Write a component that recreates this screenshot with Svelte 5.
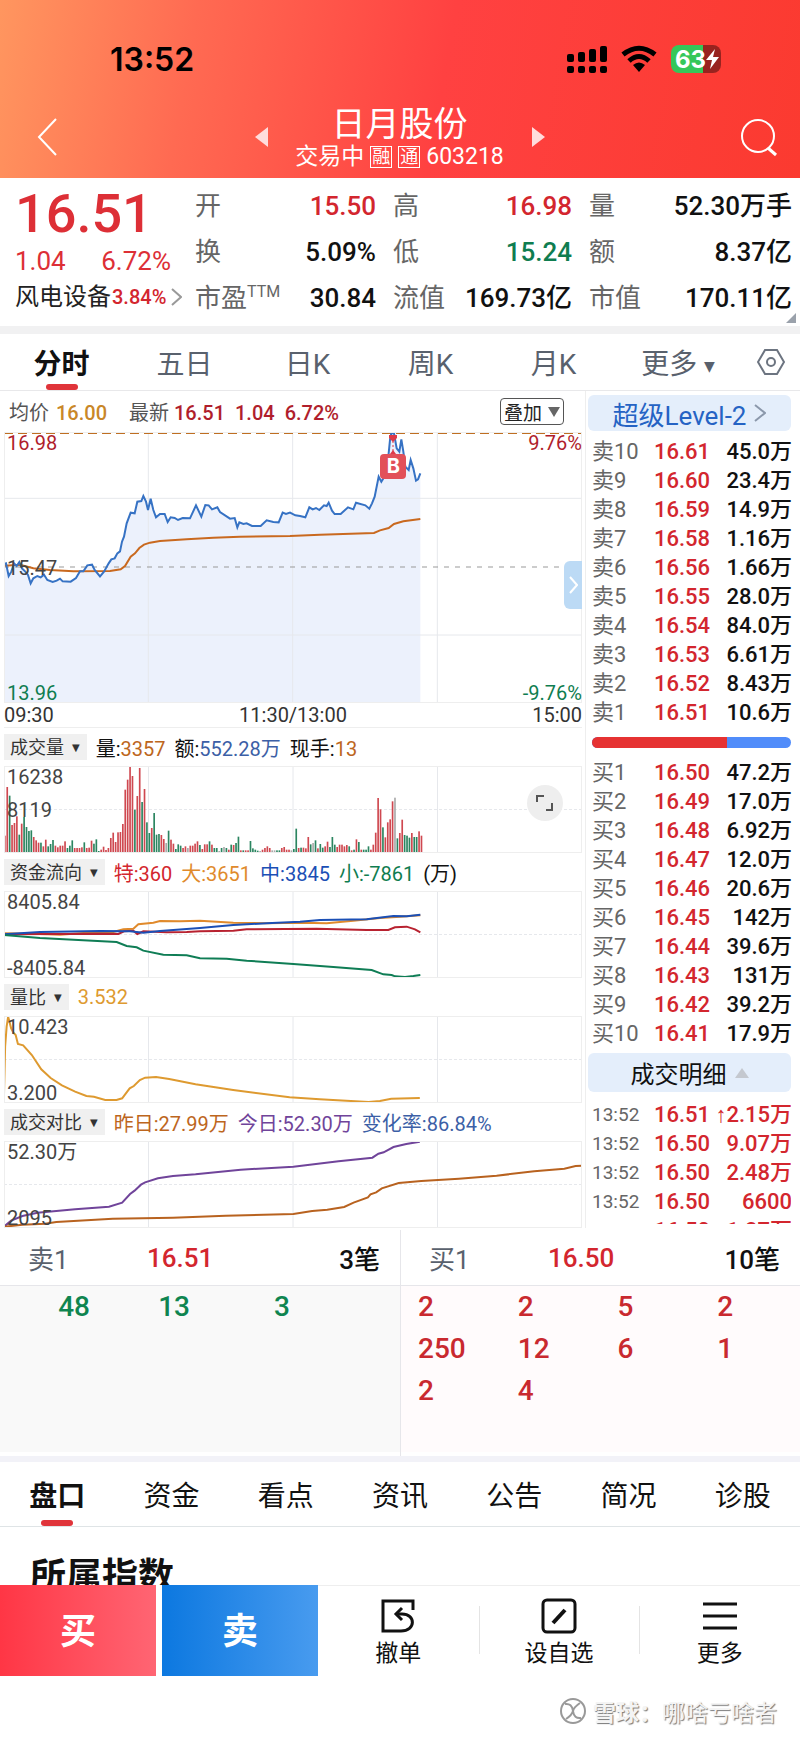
<script lang="ts">
	type Level = { name: string; price: string; amount: string };

	const stats = [
		{ label: '开', value: '15.50', tone: 'up' },
		{ label: '高', value: '16.98', tone: 'up' },
		{ label: '量', value: '52.30万手', tone: '' },
		{ label: '换', value: '5.09%', tone: '' },
		{ label: '低', value: '15.24', tone: 'down' },
		{ label: '额', value: '8.37亿', tone: '' },
		{ label: '市盈', sup: 'TTM', value: '30.84', tone: '' },
		{ label: '流值', value: '169.73亿', tone: '' },
		{ label: '市值', value: '170.11亿', tone: '' }
	];

	const periods = ['分时', '五日', '日K', '周K', '月K'];
	const sections = ['盘口', '资金', '看点', '资讯', '公告', '简况', '诊股'];
	const indicators = ['成交量', '资金流向', '量比', '成交对比'];

	let period = $state('分时');
	let section = $state('盘口');

	function levels(side: string, from: number, step: number, rows: string): Level[] {
		return rows.split(' ').map((row, i) => {
			const [price, amount] = row.split('/');
			return { name: side + (from + i * step), price, amount };
		});
	}

	const asks = levels('卖', 10, -1, '16.61/45.0万 16.60/23.4万 16.59/14.9万 16.58/1.16万 16.56/1.66万 16.55/28.0万 16.54/84.0万 16.53/6.61万 16.52/8.43万 16.51/10.6万');
	const bids = levels('买', 1, 1, '16.50/47.2万 16.49/17.0万 16.48/6.92万 16.47/12.0万 16.46/20.6万 16.45/142万 16.44/39.6万 16.43/131万 16.42/39.2万 16.41/17.9万');
	const buyShare = 68;

	const trades = [
		{ time: '13:52', price: '16.51', arrow: '↑', amount: '2.15万' },
		{ time: '13:52', price: '16.50', arrow: '', amount: '9.07万' },
		{ time: '13:52', price: '16.50', arrow: '', amount: '2.48万' },
		{ time: '13:52', price: '16.50', arrow: '', amount: '6600' },
		{ time: '', price: '16.50', arrow: '↑', amount: '1.27万' }
	];

	const askQueue = ['48', '13', '3'];
	const bidQueue = ['2', '2', '5', '2', '250', '12', '6', '1', '2', '4'];

	// intraday price and average price
	const price = '12,522 18,520 26,558 34,545 42,520 50,528 58,516 66,535 76,545 84,555 92,580 100,565 112,558 122,562 132,554 142,570 158,576 170,572 180,566 188,574 212,575 228,564 240,544 250,544 262,526 276,524 284,540 300,559 312,545 326,520 334,508 344,505 352,490 360,484 366,455 372,440 380,400 392,368 404,370 412,335 424,333 430,318 438,335 444,360 452,326 460,360 468,382 480,372 494,372 503,396 512,382 524,384 534,390 548,384 570,385 588,346 604,380 616,345 626,346 636,358 652,352 660,366 690,386 704,384 712,412 718,397 730,402 740,400 756,408 782,408 800,391 820,396 836,397 848,368 858,372 870,368 886,376 900,378 916,382 928,352 938,358 948,354 958,360 972,346 980,348 986,338 996,362 1004,372 1022,372 1044,352 1060,358 1068,338 1096,346 1108,356 1116,340 1124,320 1136,260 1144,275 1152,262 1166,190 1170,150 1174,130 1182,130 1190,175 1198,185 1204,148 1210,185 1216,230 1226,240 1232,210 1240,235 1248,272 1254,268 1261,250';
	const average = '12,527 60,524 100,535 150,540 220,544 330,543 362,538 375,528 392,500 405,490 418,474 432,464 450,458 480,453 560,448 640,443 720,440 870,438 960,434 1122,429 1140,421 1166,414 1182,402 1210,394 1261,387';

	// one bar per minute: r = up, g = down, n = flat
	const volume = 'r52 r198 g172 r84 r90 r110 g55 r88 g108 g78 g66 g68 r48 r38 r31 g31 r20 r40 g20 g27 g39 r22 r17 r22 r22 r35 g15 g22 g38 r15 r15 r15 r17 g32 r15 r16 r37 g28 g41 g6 r10 r19 r9 r15 r45 r61 r33 r62 r63 r87 r190 r220 r259 r231 g130 r171 r255 g153 r192 g92 g60 r75 g120 g55 g57 r54 r42 n30 g67 r40 r28 g12 g26 g22 r15 r20 n15 r22 r22 r28 r35 g24 r12 r26 r26 g35 r25 g15 g15 n6 g15 n18 g15 r10 g25 r24 g30 g49 r8 g8 r8 r8 g36 g14 g10 g7 n6 r10 r15 r20 r15 n8 n8 g8 g8 r15 r18 r10 r10 n8 g12 g73 r15 g16 r16 r14 r48 g26 n30 g38 r14 g27 g16 r20 r34 g18 g48 g25 r18 r25 r25 r20 r24 g20 r8 g10 r41 g33 r10 g10 g10 g20 r10 r25 r61 r165 r131 g77 r47 r92 r101 r155 n166 g44 r60 r100 g54 g52 g46 r60 g48 g48 r65 r52'
		.split(' ')
		.map((bar) => ({ kind: bar[0], size: Number(bar.slice(1)) }));

	const flow = [
		{ color: '#e08a2c', points: '12,610 100,611 180,614 260,608 340,606 370,598 400,596 415,583 460,578 480,573 540,574 600,572 700,578 800,580 900,578 980,580 1060,572 1140,564 1200,560 1261,556' },
		{ color: '#b82230', points: '12,613 300,611 355,612 372,604 400,602 412,612 430,604 500,607 560,606 600,604 700,602 740,598 950,596 1100,600 1165,600 1185,592 1220,590 1245,598 1261,607' },
		{ color: '#1b4fb5', points: '12,613 120,606 300,603 390,604 430,608 480,603 600,594 700,585 800,580 900,575 960,570 1100,568 1180,558 1220,559 1261,554' },
		{ color: '#0f7d55', points: '12,615 120,624 350,636 380,648 410,652 430,662 490,674 560,676 600,685 680,686 740,692 880,702 1000,711 1115,720 1150,733 1175,735 1185,739 1215,741 1240,738 1261,735' }
	];
	const ratio = '11,345 14,200 18,140 22,110 30,145 36,158 42,165 48,192 62,196 85,225 110,268 135,294 165,316 200,335 230,348 250,350 280,360 310,360 325,355 345,325 356,318 372,300 386,293 415,291 450,297 520,313 620,330 770,352 850,358 980,366 1010,363 1040,356 1116,354';
	const today = '11,740 30,722 60,708 100,698 200,688 290,680 325,668 346,642 358,632 375,614 386,607 420,595 460,588 520,583 640,569 780,560 900,544 990,533 1006,521 1020,517 1046,501 1080,492 1116,485';
	const yesterday = '11,740 60,734 120,731 150,726 300,716 460,713 600,707 780,702 830,693 870,689 915,681 940,668 978,652 985,643 1000,637 1015,625 1060,609 1120,603 1220,596 1320,587 1420,574 1500,566 1530,558 1546,557';
</script>

{#snippet grid(x, y, w, h)}
	<path class="grid" d="M{x} {y + h / 2}H{x + w}" stroke-dasharray="3 2" />
	<path class="grid" d="M{x + w / 4} {y}V{y + h}M{x + w / 2} {y}V{y + h}M{x + (w * 3) / 4} {y}V{y + h}" />
{/snippet}

{#snippet picker(name)}
	<span class="picker">
		<select aria-label="指标" value={name}>
			{#each indicators as item}
				<option>{item}</option>
			{/each}
		</select>
		<span class="caret">▼</span>
	</span>
{/snippet}

{#snippet book(rows)}
	<table class="book">
		<tbody>
			{#each rows as row}
				<tr>
					<th scope="row">{row.name}</th>
					<td class="up">{row.price}</td>
					<td class="amount">{row.amount}</td>
				</tr>
			{/each}
		</tbody>
	</table>
{/snippet}

<div class="app">
	<header>
		<div class="status">
			<span class="clock">13:52</span>
			<div class="signals">
				<svg width="40" height="28" viewBox="0 0 40 28">
					<rect x="0" y="9" width="7" height="8" rx="2" />
					<rect x="11" y="7" width="7" height="10" rx="2" />
					<rect x="22" y="4" width="7" height="13" rx="2" />
					<rect x="33" y="1" width="7" height="16" rx="2" />
					<rect x="0" y="21" width="7" height="7" rx="2" />
					<rect x="11" y="21" width="7" height="7" rx="2" />
					<rect x="22" y="21" width="7" height="7" rx="2" />
					<rect x="33" y="21" width="7" height="7" rx="2" />
				</svg>
				<svg width="36" height="28" viewBox="0 0 36 28">
					<g fill="none" stroke="#000" stroke-width="5">
						<path d="M2 9.500Q18 -3 34 9.500" />
						<path d="M8 16Q18 7 28 16" />
					</g>
					<path d="M12 20Q18 15 24 20L18 27Z" />
				</svg>
				<span class="battery"><span class="level">63</span>
					<svg width="13" height="20" viewBox="0 0 13 20"><path d="M9 0L0 11H6L4 20L13 8H7Z" fill="#fff" /></svg>
				</span>
			</div>
		</div>
		<div class="title-bar">
			<button aria-label="返回">
				<svg width="24" height="40" viewBox="0 0 24 40"><path d="M20 2L3 20L20 38" fill="none" stroke="#fff" stroke-width="2" /></svg>
			</button>
			<div class="stock">
				<button aria-label="上一只"><svg width="13" height="20" viewBox="0 0 13 20"><path d="M13 0V20L0 10Z" fill="#ffdcdc" /></svg></button>
				<div class="name">
					<h1>日月股份</h1>
					<p>交易中 <span class="badge">融</span><span class="badge">通</span> 603218</p>
				</div>
				<button aria-label="下一只"><svg width="13" height="20" viewBox="0 0 13 20"><path d="M0 0V20L13 10Z" fill="#ffdcdc" /></svg></button>
			</div>
			<button aria-label="搜索">
				<svg width="40" height="40" viewBox="0 0 40 40" fill="none" stroke="#fff" stroke-width="2">
					<circle cx="19" cy="19" r="16" />
					<path d="M29 31L37 38" stroke-width="3" />
				</svg>
			</button>
		</div>
	</header>

	<section class="quote">
		<div class="last">
			<strong>16.51</strong>
			<div class="change"><span>1.04</span><span>6.72%</span></div>
			<a href="#industry">风电设备<b>3.84%</b>
				<svg width="11" height="18" viewBox="0 0 11 18"><path d="M1 1L10 9L1 17" fill="none" stroke="#999" stroke-width="2" /></svg>
			</a>
		</div>
		<dl>
			{#each stats as stat}
				<div>
					<dt>{stat.label}{#if stat.sup}<sup>{stat.sup}</sup>{/if}</dt>
					<dd class={stat.tone}>{stat.value}</dd>
				</div>
			{/each}
		</dl>
		<span class="corner"></span>
	</section>

	<nav class="periods">
		{#each periods as item}
			<button class:active={period === item} onclick={() => (period = item)}>{item}</button>
		{/each}
		<button class="more">更多 <span class="caret">▼</span></button>
		<button class="settings" aria-label="设置">
			<svg width="28" height="28" viewBox="0 0 28 28" fill="none" stroke="#6c7480" stroke-width="2">
				<path d="M8 2H20L27 14L20 26H8L1 14Z" />
				<circle cx="14" cy="14" r="4" />
			</svg>
		</button>
	</nav>

	<main>
		<div class="charts">
			<div class="legend">
				<span>均价 <b class="avg">16.00</b></span>
				<span>最新 <b>16.51</b><b>1.04</b><b>6.72%</b></span>
				<button class="overlay">叠加 <svg width="12" height="10" viewBox="0 0 12 10"><path d="M0 0H12L6 10Z" fill="#666" /></svg></button>
			</div>
			<div class="plot price">
				<svg viewBox="12 126 1734 813" preserveAspectRatio="none">
					<polygon points="12,939 {price} 1261,939" fill="#ecf1fc" />
					<path class="grid" d="M12 325H1746M12 735H1746M445 126V939M878 126V939M1312 126V939" />
					<path d="M12 531H1746" stroke="#999" stroke-dasharray="5 6" />
					<path d="M12 129H1746" stroke="#bf6f22" stroke-width="2" stroke-dasharray="9 5" />
					<polyline points={average} stroke="#c9691f" stroke-width="2" />
					<polyline points={price} stroke="#3672c4" stroke-width="2" />
				</svg>
				<span class="mark top red">16.98</span>
				<span class="mark top right red">9.76%</span>
				<span class="mark middle">15.47</span>
				<span class="mark bottom green">13.96</span>
				<span class="mark bottom right green">-9.76%</span>
				<span class="trade">
					<svg width="10" height="20" viewBox="0 0 10 20"><path d="M1 1H9V4L5 8L1 4Z" fill="#dd3a48" /><path d="M5 7V18" stroke="#dd3a48" stroke-dasharray="2 2" /><path d="M2 20L5 16L8 20Z" fill="#e25059" /></svg>
					<b>B</b>
				</span>
				<button class="drawer" aria-label="展开">
					<svg width="9" height="18" viewBox="0 0 9 18"><path d="M1 1L8 9L1 17" fill="none" stroke="#fff" stroke-width="2" /></svg>
				</button>
			</div>
			<div class="times"><span>09:30</span><span>11:30/13:00</span><span>15:00</span></div>

			<div class="head">
				{@render picker('成交量')}
				<span class="strong">量:<i class="brown">3357</i></span>
				<span class="strong">额:<i class="blue">552.28万</i></span>
				<span class="strong">现手:<i class="brown">13</i></span>
			</div>
			<div class="plot">
				<svg viewBox="12 108 1734 261" preserveAspectRatio="none">
					{@render grid(12, 108, 1734, 261)}
					{#each volume as bar, i}
						<rect class={bar.kind} x={12 + i * 7.225} y={369 - bar.size} width="5" height={bar.size} />
					{/each}
				</svg>
				<span class="mark top">16238</span>
				<span class="mark middle">8119</span>
				<button class="expand" aria-label="全屏">
					<svg width="18" height="18" viewBox="0 0 18 18" fill="none" stroke="#555" stroke-width="2"><path d="M1 8V2H8M10 16H16V9" /></svg>
				</button>
			</div>

			<div class="head">
				{@render picker('资金流向')}
				<span class="up">特:360</span>
				<span class="orange">大:3651</span>
				<span class="navy">中:3845</span>
				<span class="green">小:-7861</span>
				<span>(万)</span>
			</div>
			<div class="plot">
				<svg viewBox="12 483 1734 261" preserveAspectRatio="none">
					{@render grid(12, 483, 1734, 261)}
					{#each flow as line}
						<polyline points={line.points} stroke={line.color} stroke-width="2" />
					{/each}
				</svg>
				<span class="mark top">8405.84</span>
				<span class="mark bottom">-8405.84</span>
			</div>

			<div class="head">
				{@render picker('量比')}
				<span class="gold">3.532</span>
			</div>
			<div class="plot">
				<svg viewBox="11 108 1536 261" preserveAspectRatio="none">
					{@render grid(11, 108, 1536, 261)}
					<polyline points={ratio} stroke="#de9a30" stroke-width="2" />
				</svg>
				<span class="mark top">10.423</span>
				<span class="mark bottom">3.200</span>
			</div>

			<div class="head">
				{@render picker('成交对比')}
				<span class="brown">昨日:27.99万</span>
				<span class="purple">今日:52.30万</span>
				<span class="blue">变化率:86.84%</span>
			</div>
			<div class="plot">
				<svg viewBox="11 483 1536 261" preserveAspectRatio="none">
					{@render grid(11, 483, 1536, 261)}
					<polyline points={today} stroke="#70449a" stroke-width="2" />
					<polyline points={yesterday} stroke="#b8621f" stroke-width="2" />
				</svg>
				<span class="mark top">52.30万</span>
				<span class="mark bottom">2095</span>
			</div>
		</div>

		<aside>
			<button class="panel-button level2">超级Level-2
				<svg width="12" height="18" viewBox="0 0 12 18"><path d="M1 1L11 9L1 17" fill="none" stroke="#8b98ab" stroke-width="2" /></svg>
			</button>
			{@render book(asks)}
			<div class="share"><span style="width: {buyShare}%"></span></div>
			{@render book(bids)}
			<button class="panel-button detail">成交明细
				<svg width="14" height="10" viewBox="0 0 14 10"><path d="M7 0L14 10H0Z" fill="#c4c8cf" /></svg>
			</button>
			<div class="trades">
				<table class="book">
					<tbody>
						{#each trades as trade}
							<tr>
								<th scope="row">{trade.time}</th>
								<td class="up">{trade.price}</td>
								<td class="amount up"><i class="arrow">{trade.arrow}</i>{trade.amount}</td>
							</tr>
						{/each}
					</tbody>
				</table>
			</div>
		</aside>
	</main>

	<section class="queues">
		<div class="queue ask">
			<div class="queue-head"><span>卖1</span><b class="up">16.51</b><b>3笔</b></div>
			<ul>
				{#each askQueue as lot}<li>{lot}</li>{/each}
			</ul>
		</div>
		<div class="queue bid">
			<div class="queue-head"><span>买1</span><b class="up">16.50</b><b>10笔</b></div>
			<ul>
				{#each bidQueue as lot}<li>{lot}</li>{/each}
			</ul>
		</div>
	</section>

	<nav class="sections">
		{#each sections as item}
			<button class:active={section === item} onclick={() => (section = item)}>{item}</button>
		{/each}
	</nav>
	<section class="index"><h2>所属指数</h2></section>

	<footer>
		<button class="buy">买</button>
		<button class="sell">卖</button>
		<div class="tools">
			<button>
				<svg width="36" height="36" viewBox="0 0 36 36" fill="none" stroke="#111" stroke-width="3">
					<path d="M33 12V3H3V33H21C36 33 36 16 22 16H16" />
					<path d="M22 10L16 16L22 22" />
				</svg>
				撤单
			</button>
			<button>
				<svg width="36" height="36" viewBox="0 0 36 36" fill="none" stroke="#111" stroke-width="3">
					<rect x="2" y="2" width="32" height="32" rx="4" />
					<path d="M12 25L24 12" stroke-width="4" />
				</svg>
				设自选
			</button>
			<button>
				<svg width="36" height="36" viewBox="0 0 36 36" fill="none" stroke="#111" stroke-width="3">
					<path d="M1 6H35M1 18H35M1 30H35" />
				</svg>
				更多
			</button>
		</div>
	</footer>
	<div class="watermark">
		<svg width="28" height="28" viewBox="0 0 28 28" fill="none" stroke="#999" stroke-width="2">
			<circle cx="14" cy="14" r="12" />
			<path d="M6 7Q13 6 14 14T22 21M21 6Q15 10 14 14T7 22" />
		</svg>
		<div><b>雪球：</b><span>哪啥亏啥者</span></div>
	</div>
</div>

<style>
	:global(body) {
		background: #fff;
	}

	.app {
		font-family: Roboto, 'Noto Sans CJK SC', sans-serif;
		color: #111;
		font-size: 20px;
	}

	button,
	select {
		font: inherit;
		color: inherit;
		background: none;
		border: none;
		margin: 0;
		padding: 0;
		cursor: pointer;
	}

	svg {
		display: block;
		flex-shrink: 0;
	}

	h1, h2, p, dl, dd, ul {
		margin: 0;
		padding: 0;
		font-weight: 400;
	}

	i {
		font-style: normal;
	}

	.up {
		color: #d3262e;
	}

	.down,
	.green {
		color: #0f7d50;
	}

	.brown { color: #bd661d; }
	.orange { color: #e08a2c; }
	.gold { color: #de9a30; }
	.blue { color: #3c5fa6; }
	.navy { color: #1b4fb5; }
	.purple { color: #70449a; }
	.red { color: #b01e2c; }

	header {
		height: 178px;
		background: linear-gradient(100deg, #ff965f 0%, #ff6a52 24%, #ff4141 55%, #fb3a30 100%);
	}

	.status {
		display: flex;
		align-items: center;
		justify-content: space-between;
		height: 84px;
		padding: 34px 79px 0 110px;
		box-sizing: border-box;
		color: #000;
	}

	.clock {
		font-family: Inter, sans-serif;
		font-size: 32px;
		font-weight: 600;
	}

	.signals {
		display: flex;
		align-items: center;
		gap: 14px;
	}

	.battery {
		display: flex;
		align-items: center;
		width: 50px;
		height: 28px;
		border-radius: 8px;
		background: linear-gradient(90deg, #35c759 64%, #98231f 64%);
		color: #fff;
	}

	.level {
		padding-left: 4px;
		font-family: Inter, sans-serif;
		font-size: 24px;
		font-weight: 700;
	}

	.title-bar {
		display: flex;
		justify-content: space-between;
		align-items: center;
		height: 94px;
		padding: 12px 21px 0 36px;
		box-sizing: border-box;
		color: #fff;
	}

	.stock {
		display: flex;
		align-items: center;
		justify-content: space-between;
		width: 290px;
	}

	.name {
		text-align: center;
		white-space: nowrap;
	}

	h1 {
		font-size: 34px;
		line-height: 40px;
	}

	.name p {
		display: flex;
		align-items: center;
		gap: 6px;
		font-size: 23px;
		line-height: 26px;
	}

	.badge {
		border: 1px solid #fff;
		font-size: 18px;
		line-height: 20px;
		width: 20px;
	}

	.quote {
		display: grid;
		grid-template-columns: 180px 1fr;
		gap: 0 15px;
		height: 148px;
		padding-right: 8px;
		position: relative;
		border-bottom: 8px solid #f1f1f2;
	}

	.last {
		padding-left: 15px;
		color: #dd2f36;
		white-space: nowrap;
	}

	.last strong {
		display: block;
		font-size: 54px;
		font-weight: 500;
		line-height: 64px;
		padding-top: 4px;
	}

	.change {
		display: flex;
		justify-content: space-between;
		padding-right: 9px;
		font-size: 26px;
		line-height: 30px;
	}

	.last a {
		display: flex;
		align-items: center;
		color: #222;
		font-size: 24px;
		line-height: 42px;
		text-decoration: none;
	}

	.last b {
		padding: 0 5px 0 1px;
		color: #d3262e;
		font-size: 20px;
		font-weight: 500;
	}

	dl {
		display: grid;
		grid-template-columns: 181px 179px 1fr;
		grid-auto-rows: 46px;
		column-gap: 17px;
		padding-top: 5px;
		font-size: 26px;
		line-height: 46px;
	}

	dl div {
		display: flex;
		justify-content: space-between;
		white-space: nowrap;
	}

	dt {
		color: #666;
	}

	sup {
		font-size: 16px;
		line-height: 16px;
	}

	dd {
		font-weight: 500;
	}

	.corner {
		position: absolute;
		right: 4px;
		bottom: 3px;
		border-left: 10px solid transparent;
		border-bottom: 10px solid #9aa1ab;
	}

	.periods {
		display: flex;
		height: 56px;
		border-bottom: 1px solid #e8e8ea;
		color: #59616d;
		font-size: 28px;
	}

	.periods button {
		flex: 123;
		white-space: nowrap;
	}

	.periods .more {
		flex: 126;
	}

	.periods .settings {
		display: flex;
		justify-content: center;
		align-items: center;
		flex: 59;
	}

	.periods .active,
	.sections .active {
		position: relative;
		color: #111;
		font-weight: 700;
	}

	.active::after {
		content: '';
		position: absolute;
		left: 50%;
		bottom: 0;
		width: 32px;
		height: 6px;
		margin-left: -16px;
		border-radius: 3px;
		background: #e0343a;
	}

	.caret {
		font-family: 'DejaVu Sans', sans-serif;
		font-size: 14px;
	}

	.more .caret {
		vertical-align: 3px;
	}

	main {
		display: grid;
		grid-template-columns: minmax(0, 1fr) 214px;
	}

	.charts {
		padding-left: 4px;
		padding-right: 3px;
		border-right: 1px solid #eee;
	}

	.legend {
		display: flex;
		align-items: center;
		gap: 22px;
		height: 41px;
		padding-left: 5px;
		color: #555;
		white-space: nowrap;
	}

	.legend b {
		color: #b01e2c;
		font-weight: 500;
		margin-right: 10px;
	}

	.legend .avg {
		color: #c98728;
		margin: 0 0 0 2px;
	}

	.legend .overlay {
		display: flex;
		align-items: center;
		justify-content: center;
		gap: 6px;
		width: 64px;
		height: 27px;
		margin-left: auto;
		margin-right: 18px;
		border: 1px solid #555;
		border-radius: 4px;
		color: #222;
		font-size: 19px;
	}

	.plot {
		position: relative;
		height: 87px;
		outline: 1px solid #eee;
		outline-offset: -1px;
	}

	.plot.price {
		height: 271px;
	}

	.plot > svg {
		width: 100%;
		height: 100%;
	}

	.plot path,
	.plot polyline {
		fill: none;
		vector-effect: non-scaling-stroke;
	}

	.plot .trade path {
		fill: #dd3a48;
	}

	.grid {
		stroke: #e6e8ec;
	}

	.r { fill: #cf4850; }
	.g { fill: #2b8560; }
	.n { fill: #aaa; }

	.mark {
		position: absolute;
		left: 3px;
		color: #444;
		line-height: 20px;
	}

	.mark.red { color: #b01e2c; }
	.mark.green { color: #0f7d50; }

	.mark.right {
		left: auto;
		right: 0;
	}

	.mark.top { top: 1px; }
	.mark.bottom { bottom: 0; }

	.mark.middle {
		top: 50%;
		margin-top: -10px;
	}

	.trade {
		position: absolute;
		left: 67%;
		top: 2px;
		display: flex;
		flex-direction: column;
		align-items: center;
		width: 26px;
		margin-left: -11px;
	}

	.trade b {
		width: 26px;
		border-radius: 4px;
		background: #e25059;
		color: #fff;
		font-family: Inter, sans-serif;
		line-height: 25px;
		text-align: center;
	}

	.drawer {
		position: absolute;
		right: 0;
		top: 129px;
		display: flex;
		align-items: center;
		justify-content: center;
		width: 18px;
		height: 48px;
		border-radius: 6px 0 0 6px;
		background: #bcdaf5;
	}

	.expand {
		position: absolute;
		right: 19px;
		top: 19px;
		display: flex;
		align-items: center;
		justify-content: center;
		width: 36px;
		height: 36px;
		border-radius: 50%;
		background: #eee;
	}

	.times {
		display: flex;
		justify-content: space-between;
		height: 24px;
		line-height: 24px;
		border-bottom: 1px solid #eee;
		color: #333;
	}

	.head {
		display: flex;
		align-items: center;
		gap: 9px;
		height: 38px;
		white-space: nowrap;
	}

	.head .strong {
		color: #111;
	}

	.picker {
		display: flex;
		align-items: center;
		gap: 8px;
		height: 26px;
		padding: 0 7px 0 6px;
		background: #f0f0f0;
		color: #333;
		font-size: 18px;
	}

	.picker select {
		appearance: none;
		field-sizing: content;
	}

	.picker .caret {
		font-size: 10px;
		pointer-events: none;
	}

	aside {
		display: flex;
		flex-direction: column;
		padding: 4px 9px 0 2px;
	}

	.panel-button {
		display: flex;
		align-items: center;
		justify-content: center;
		gap: 8px;
		height: 36px;
		border-radius: 6px;
		background: #e4eefb;
		font-size: 24px;
		white-space: nowrap;
	}

	.level2 {
		color: #2563c4;
		font-size: 26px;
		margin-bottom: 6px;
	}

	.detail {
		height: 39px;
		margin: 5px 0 8px;
	}

	.book {
		width: 200px;
		margin-left: 4px;
		border-collapse: collapse;
		table-layout: fixed;
		white-space: nowrap;
	}

	.book th {
		width: 62px;
		padding: 0;
		color: #666;
		font-size: 22px;
		font-weight: 400;
		line-height: 29px;
		text-align: left;
	}

	.book td {
		width: 56px;
		padding: 0;
		font-size: 22px;
		font-weight: 500;
		line-height: 29px;
	}

	.book .amount {
		width: 82px;
		text-align: right;
	}

	.arrow {
		font-family: 'Liberation Sans', sans-serif;
	}

	.share {
		height: 11px;
		margin: 10px 0 10px 4px;
		border-radius: 6px;
		overflow: hidden;
		background: #508cfa;
		width: 199px;
	}

	.share span {
		display: block;
		height: 100%;
		background: #e63232;
	}

	.trades {
		height: 124px;
		overflow: hidden;
	}

	.trades th {
		font-size: 19px;
	}

	.queues {
		display: grid;
		grid-template-columns: 1fr 1fr;
		border-top: 2px solid #fff;
		border-bottom: 6px solid #f2f2f8;
	}

	.queue-head {
		display: grid;
		grid-template-columns: 119px 1fr auto;
		align-items: center;
		height: 55px;
		padding: 0 20px 0 28px;
		border-bottom: 1px solid #e6e6ea;
		font-size: 26px;
	}

	.queue-head span {
		color: #59616d;
	}

	.queue-head b {
		font-weight: 500;
	}

	.bid {
		border-left: 1px solid #e6e6ea;
	}

	ul {
		display: grid;
		grid-template-columns: repeat(4, 1fr);
		grid-auto-rows: 42px;
		height: 166px;
		margin-bottom: 4px;
		list-style: none;
		font-size: 28px;
		font-weight: 500;
		line-height: 42px;
	}

	.ask ul {
		background: #f9f9f9;
		color: #0f8550;
	}

	.ask li {
		padding-right: 10px;
		text-align: right;
	}

	.bid ul {
		background: #fffbfc;
		color: #c9292f;
	}

	.bid li {
		padding-left: 17px;
	}

	.sections {
		display: flex;
		height: 64px;
		border-bottom: 1px solid #dfe4e6;
		font-size: 28px;
	}

	.sections button {
		flex: 1;
	}

	.index {
		height: 58px;
		overflow: hidden;
	}

	h2 {
		padding: 24px 0 0 30px;
		font-size: 36px;
		font-weight: 700;
		line-height: 52px;
	}

	footer {
		display: grid;
		grid-template-columns: 156px 156px 1fr;
		column-gap: 6px;
		height: 91px;
	}

	.buy,
	.sell {
		padding-bottom: 6px;
		color: #fff;
		font-size: 36px;
		font-weight: 700;
	}

	.buy {
		background: linear-gradient(90deg, #ff3645, #ff6573);
	}

	.sell {
		background: linear-gradient(90deg, #0c78e0, #489bef);
	}

	.tools {
		display: grid;
		grid-template-columns: repeat(3, 1fr);
		margin-left: -6px;
		border-top: 1px solid #eee;
	}

	.tools button {
		display: flex;
		flex-direction: column;
		align-items: center;
		gap: 4px;
		padding-top: 12px;
		font-size: 23px;
		line-height: 32px;
	}

	.tools button + button {
		background: linear-gradient(#e4e4e4, #e4e4e4) 0 20px / 1px 48px no-repeat;
	}

	.watermark {
		display: flex;
		align-items: center;
		justify-content: flex-end;
		gap: 6px;
		height: 62px;
		padding: 8px 23px 0 0;
		box-sizing: border-box;
		color: #f4f4f4;
		font-size: 23px;
		text-shadow: 1px 1px 1px #777;
	}
</style>
